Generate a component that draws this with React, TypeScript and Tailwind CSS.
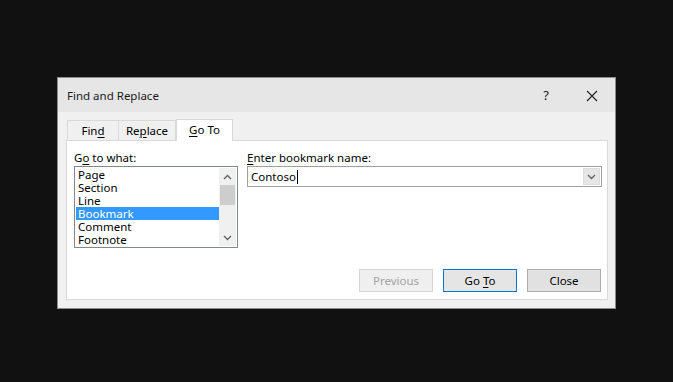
import React from "react";

const font = { fontFamily: '"Segoe UI", "Noto Sans", "Open Sans", sans-serif' };

function U({ children }: { children: React.ReactNode }) {
  return <span className="underline underline-offset-[2px] decoration-[1px]">{children}</span>;
}

function ChevUp() {
  return (
    <svg width="9" height="6" viewBox="0 0 9 6">
      <path d="M1 5 L4.5 1.5 L8 5" fill="none" stroke="#606060" strokeWidth="1.3" />
    </svg>
  );
}
function ChevDown({ color = "#606060" }: { color?: string }) {
  return (
    <svg width="9" height="6" viewBox="0 0 9 6">
      <path d="M1 1 L4.5 4.5 L8 1" fill="none" stroke={color} strokeWidth="1.3" />
    </svg>
  );
}

export default function App() {
  const items = ["Page", "Section", "Line", "Bookmark", "Comment", "Footnote"];
  return (
    <div className="w-[673px] h-[382px] bg-[#111111] pt-[77px] pl-[57px]" style={font}>
      <div className="w-[559px] h-[232px] bg-[#f0f0f0] border border-[#8c8c8c] flex flex-col text-[11.5px] text-black">
        {/* title bar */}
        <div className="h-[34px] bg-[#e6e6e6] flex items-center pl-[9px] pt-[2px] shrink-0">
          <span className="text-[11.5px] text-[#1a1a1a]">Find and Replace</span>
          <div className="ml-auto flex items-center h-full">
            <div className="w-[46px] h-full flex items-center justify-center text-[13px] text-[#222]">?</div>
            <div className="w-[46px] h-full flex items-center justify-center">
              <svg width="12" height="12" viewBox="0 0 12 12">
                <path d="M1 1 L11 11 M11 1 L1 11" stroke="#222" strokeWidth="1.1" />
              </svg>
            </div>
          </div>
        </div>
        {/* body */}
        <div className="pl-[8px] pr-[7px] pt-[6px]">
          {/* tabs */}
          <div className="flex items-end h-[22px] pl-[1px]">
            <div className="w-[52px] h-[20px] border border-b-0 border-[#d9d9d9] bg-[#f0f0f0] flex items-center justify-center">
              <span>
                Fin<U>d</U>
              </span>
            </div>
            <div className="w-[57px] h-[20px] border border-l-0 border-b-0 border-[#d9d9d9] bg-[#f0f0f0] flex items-center justify-center">
              <span>
                Re<U>p</U>lace
              </span>
            </div>
            <div className="relative z-10 w-[57px] h-[22px] border border-b-0 border-[#d9d9d9] bg-white flex items-center justify-center -mb-px pb-[1px]">
              <span>
                <U>G</U>o To
              </span>
            </div>
          </div>
          {/* panel */}
          <div className="h-[160px] border border-[#d9d9d9] bg-white flex flex-col pl-[7px] pr-[5px] pt-[9px] pb-[7px]">
            <div className="flex">
              <div className="w-[164px] flex flex-col">
                <div className="h-[15px] leading-[15px]">
                  G<U>o</U> to what:
                </div>
                <div className="mt-[1px] h-[82px] border border-[#828790] flex p-[1px]">
                  <div className="flex-1 flex flex-col">
                    {items.map((it) => (
                      <div
                        key={it}
                        className={
                          "h-[13px] leading-[13px] pl-[2px] " +
                          (it === "Bookmark" ? "bg-[#3399ff] text-white" : "")
                        }
                      >
                        {it}
                      </div>
                    ))}
                  </div>
                  <div className="w-[17px] bg-[#f0f0f0] flex flex-col items-center">
                    <div className="h-[17px] w-full flex items-center justify-center">
                      <ChevUp />
                    </div>
                    <div className="w-[15px] h-[20px] bg-[#cdcdcd]" />
                    <div className="flex-1" />
                    <div className="h-[17px] w-full flex items-center justify-center">
                      <ChevDown />
                    </div>
                  </div>
                </div>
              </div>
              <div className="ml-[9px] flex-1 flex flex-col">
                <div className="h-[15px] leading-[15px]">
                  <U>E</U>nter bookmark name:
                </div>
                <div className="mt-[1px] h-[21px] border border-[#a0a0a0] flex items-stretch">
                  <div className="flex-1 flex items-center pl-[3px]">
                    <span>Contoso</span>
                    <span className="inline-block w-[1px] h-[14px] bg-black ml-[1px]" />
                  </div>
                  <div className="w-[17px] m-[1px] bg-[#e6e6e6] border border-[#dcdcdc] flex items-center justify-center">
                    <ChevDown />
                  </div>
                </div>
              </div>
            </div>
            <div className="mt-auto flex justify-end gap-[10px] pr-[1px]">
              <div className="w-[74px] h-[23px] border border-[#d5d5d5] bg-[#efefef] text-[#a3a3a3] flex items-center justify-center">
                <span>Previous</span>
              </div>
              <div className="w-[74px] h-[23px] border border-[#0078d7] bg-[#e5e5e5] flex items-center justify-center">
                <span>
                  Go <U>T</U>o
                </span>
              </div>
              <div className="w-[74px] h-[23px] border border-[#adadad] bg-[#e1e1e1] flex items-center justify-center">
                <span>Close</span>
              </div>
            </div>
          </div>
        </div>
      </div>
    </div>
  );
}
